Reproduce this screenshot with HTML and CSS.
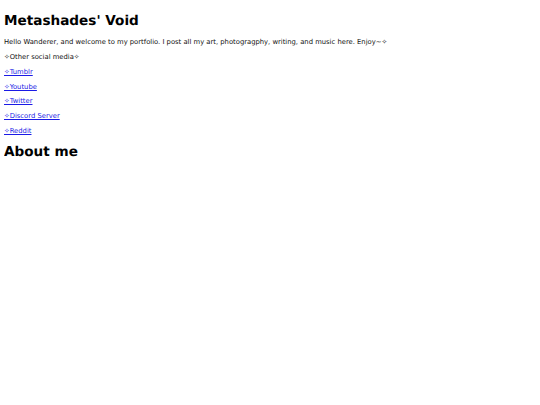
FILE: index.html
```html
<!DOCTYPE html>
<html>
<head>
<meta charset="utf-8">
<link rel="stylesheet" href="styles.css">
</head>
<body>
<h1 class="title">Metashades' Void</h1>
<p class="line">Hello Wanderer, and welcome to my portfolio. I post all my art, photogragphy, writing, and music here. Enjoy~✧</p>
<p class="line">✧Other social media✧</p>
<p class="line"><a href="#">✧Tumblr</a></p>
<p class="line"><a href="#">✧Youtube</a></p>
<p class="line"><a href="#">✧Twitter</a></p>
<p class="line"><a href="#">✧Discord Server</a></p>
<p class="line"><a href="#">✧Reddit</a></p>
<h1 class="title">About me</h1>
</body>
</html>
```
FILE: styles.css
```css
body {
  margin: 4px;
  font-family: "DejaVu Sans", Verdana, sans-serif;
  font-size: 6.8px;
  color: #111;
  background: #fff;
  text-rendering: geometricPrecision;
}
.title {
  font-size: 2em;
  font-weight: bold;
  margin: 0.67em 0;
  color: #000;
}
.line {
  margin: 1em 0;
}
a {
  color: #1a1ae6;
}
```
